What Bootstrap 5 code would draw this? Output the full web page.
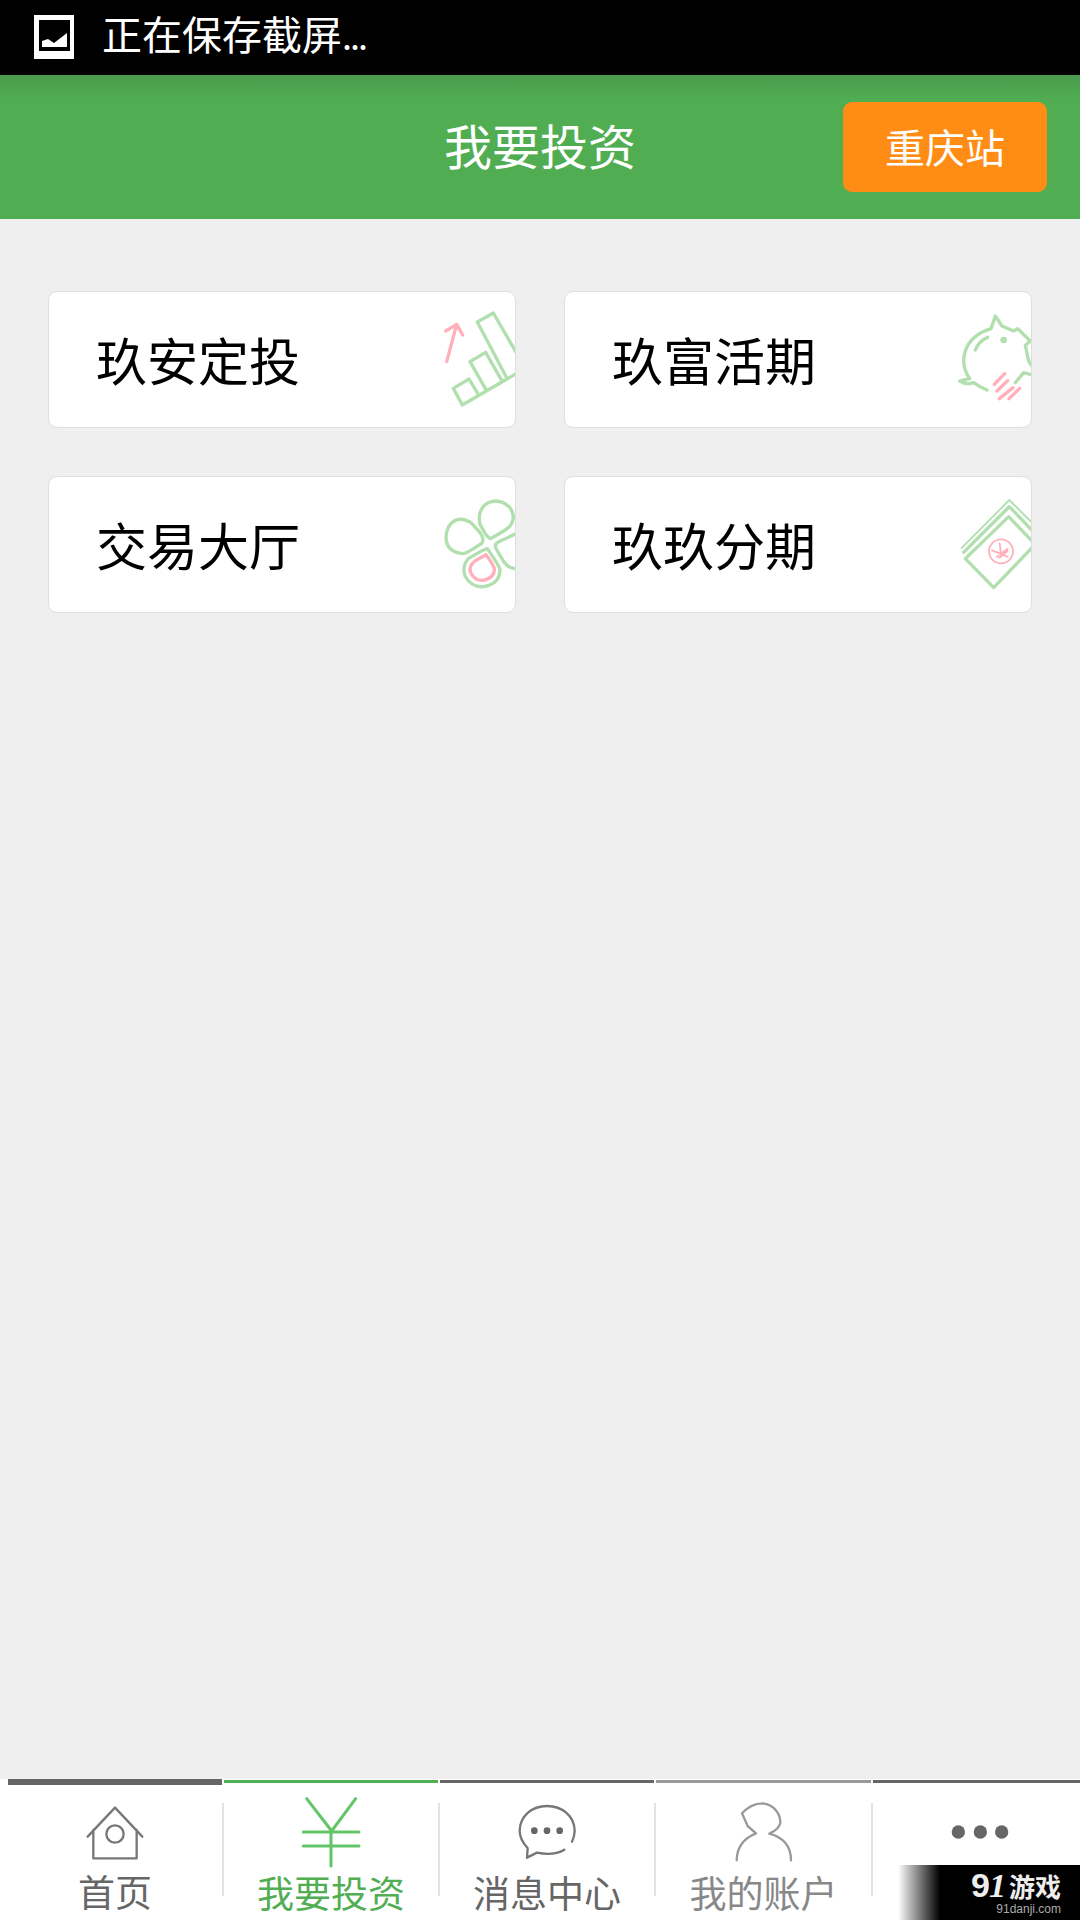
<!DOCTYPE html>
<html lang="zh-CN">
<head>
    <meta charset="UTF-8">
    <meta name="viewport" content="width=device-width, initial-scale=1">
    <title>我要投资</title>
    <link href="https://cdn.jsdelivr.net/npm/bootstrap@5.3.2/dist/css/bootstrap.min.css" rel="stylesheet">
    <style>
        html, body { height: 1920px; }
        body {
            width: 1080px;
            margin: 0;
            background-color: #efefef;
            font-family: "Noto Sans CJK SC", "Liberation Sans", sans-serif;
        }
        .status-strip { height: 75px; background-color: #000; color: #fff; font-size: 40px; line-height: 1; padding-left: 34px; gap: 28px; }
        .status-icon { margin-top: -2px; }
        .status-text { margin-top: -9px; }
        .status-dots { letter-spacing: -2px; font-size: 36px; }
        .top-header {
            height: 144px;
            display: grid;
            grid-template-columns: 1fr auto 1fr;
            align-items: center;
            color: #fff;
            background: linear-gradient(180deg, #4a9c4e 0, #50ad52 24px);
        }
        .top-title { font-size: 48px; line-height: 1; margin-top: -6px; }
        .site-btn {
            justify-self: end;
            width: 204px;
            height: 90px;
            margin: 0 33px 0 0;
            padding: 0 0 3px 0;
            border: 0;
            border-radius: 9px;
            background-color: #ff8c14;
            color: #fff;
            font-size: 40px;
            line-height: 1;
        }
        .invest-grid {
            display: grid;
            grid-template-columns: 468px 468px;
            grid-auto-rows: 137px;
            gap: 48px;
            padding: 72px 48px 0;
        }
        .invest-card {
            border: 1px solid #dedede;
            border-radius: 9px;
            overflow: hidden;
            padding-left: 47px;
            font-size: 51px;
            line-height: 1;
            color: #000;
        }
        .invest-card svg { flex: none; }
        .ic-green { fill: none; stroke: #b1dfae; stroke-width: 10; stroke-linecap: round; stroke-linejoin: round; }
        .ic-pink { fill: none; stroke: #ffb0ba; stroke-width: 10; stroke-linecap: round; stroke-linejoin: round; }
        .ic-thin { stroke-width: 5.5; }
        .ic-flat { stroke-linecap: butt; }
        .tab-strip { height: 141px; background-color: #fff; padding-left: 8px; overflow: hidden; position: relative; }
        .tab-cell { flex: 0 0 216px; position: relative; text-align: center; color: #666; }
        .tab-cell.wider { flex-basis: 217px; }
        .tab-cell.has-rule::after {
            content: "";
            position: absolute;
            right: 0;
            top: 24px;
            width: 2px;
            height: 93px;
            background-color: #e2e2e2;
        }
        .tab-bar-wrap { height: 16px; padding-right: 2px; }
        .tab-bar { height: 3px; margin-top: 1px; background-color: #666; }
        .tab-bar.thick { height: 6px; margin-top: 0; }
        .tab-bar.green { background-color: #51ae53; }
        .tab-bar.soft { background-color: #999; }
        .tab-cell svg { display: block; margin: 0 auto; }
        .tab-label { font-size: 37px; line-height: 40px; margin-top: -2px; padding-right: 2px; white-space: nowrap; }
        .tab-label.green { color: #51ae53; }
        .tab-label.soft { color: #888; }
        .tab-line { fill: none; stroke: #777; stroke-width: 7; stroke-linecap: round; stroke-linejoin: round; }
        .tab-line.soft { stroke: #999; }
        .tab-line.green { stroke: #62c668; stroke-width: 9; }
        .brand-patch {
            position: absolute;
            right: 0;
            bottom: 0;
            width: 182px;
            height: 55px;
            padding-right: 19px;
            text-align: right;
            color: #eee;
            background: linear-gradient(90deg, #fff 0, #000 42px);
        }
        .brand-main { font-size: 26px; line-height: 30px; margin-top: 5px; font-weight: 700; }
        .brand-num { font-family: "Liberation Sans", sans-serif; font-size: 34px; margin-right: 4px; letter-spacing: -1px; }
        .brand-num i { font-family: "Liberation Serif", serif; }
        .brand-url { font-family: "Liberation Sans", sans-serif; font-size: 12px; line-height: 14px; color: #aaa; margin-top: 1px; }
    </style>
</head>
<body class="d-flex flex-column">
    <div class="status-strip d-flex align-items-center">
        <svg class="status-icon" width="40" height="44" viewBox="0 0 40 44">
            <rect width="40" height="44" fill="#fff"/>
            <rect x="5" y="5" width="31" height="31" fill="#000"/>
            <path d="M8 32 V26 L14 24 L20 28 L33 18 V32 Z" fill="#fff"/>
        </svg>
        <span class="status-text">正在保存截屏<span class="status-dots">...</span></span>
    </div>

    <div class="top-header">
        <span></span>
        <span class="top-title">我要投资</span>
        <button class="btn site-btn" type="button">重庆站</button>
    </div>

    <div class="invest-grid flex-grow-1">
        <a class="card invest-card flex-row align-items-center justify-content-between text-decoration-none">
            <span>玖安定投</span>
            <svg width="85" height="135" viewBox="90 38 255 405">
                <path class="ic-pink" d="M140 247 L170 135 M137 155 L170 135 L188 167"/>
                <path class="ic-green" d="M187 377 L350 282 M187 377 L160 327 L207 299 L235 345 M258 331 L210 247 L257 219 L305 303 M320 295 L232 128 L280 101 L350 222"/>
            </svg>
        </a>
        <a class="card invest-card flex-row align-items-center justify-content-between text-decoration-none">
            <span>玖富活期</span>
            <svg width="85" height="135" viewBox="47 38 255 405">
                <path class="ic-green" d="M118 298 C85 250 95 175 182 148 L195 110 L215 140 L250 155 L262 148 L300 185 L285 198 L295 245 L310 268 M310 288 L280 280 L255 310 M170 332 Q150 325 130 310 Q110 318 88 305 Q105 300 118 298 M135 212 Q145 185 172 174"/>
                <circle cx="220" cy="182" r="10" fill="#b1dfae"/>
                <path class="ic-pink" d="M192 315 L223 283 M200 335 L232 304 M207 358 L248 325 M236 358 L268 327"/>
            </svg>
        </a>
        <a class="card invest-card flex-row align-items-center justify-content-between text-decoration-none">
            <span>交易大厅</span>
            <svg width="85" height="135" viewBox="90 23 255 405">
                <path class="ic-green" d="M245 222 Q255 212 240 190 L218 165 Q200 148 175 150 Q140 160 138 205 Q140 250 190 253 Q200 252 245 222 Z"/>
                <path class="ic-green" d="M272 208 Q262 205 255 192 L240 165 Q230 120 265 100 Q300 85 330 115 Q350 145 330 170 Q325 178 272 208 Z"/>
                <path class="ic-green" d="M350 192 L295 218 Q282 225 288 238 L310 275 Q325 298 350 298"/>
                <path class="ic-green" d="M262 238 Q255 238 205 268 Q185 290 195 320 Q215 355 250 352 Q300 345 300 300 Q298 290 262 238 Z"/>
                <path class="ic-pink" d="M258 256 L225 275 Q205 290 212 310 Q225 335 250 333 Q285 325 283 298 Q280 285 258 256 Z"/>
            </svg>
        </a>
        <a class="card invest-card flex-row align-items-center justify-content-between text-decoration-none">
            <span>玖玖分期</span>
            <svg width="85" height="135" viewBox="47 23 255 405">
                <path class="ic-green ic-thin ic-flat" d="M92 238 L237 92 L310 165"/>
                <path class="ic-green ic-flat" d="M97 252 L237 112 L310 188"/>
                <path class="ic-green ic-flat" d="M310 220 L235 142 L105 268 L190 355 L310 230"/>
                <circle class="ic-pink ic-thin" cx="212" cy="246" r="36"/>
                <path class="ic-pink ic-thin" d="M208 222 L213 262 M185 243 L232 262 M200 262 L232 238 M207 265 L232 245"/>
            </svg>
        </a>
    </div>

    <div class="tab-strip d-flex">
        <div class="tab-cell has-rule">
            <div class="tab-bar-wrap"><div class="tab-bar thick"></div></div>
            <svg width="100" height="78" viewBox="198 75 300 234">
                <path class="tab-line" d="M263 200 L345 113 L427 200 M280 180 V265 H410 V180"/>
                <circle class="tab-line" cx="345" cy="192" r="26"/>
            </svg>
            <div class="tab-label">首页</div>
        </div>
        <div class="tab-cell has-rule">
            <div class="tab-bar-wrap"><div class="tab-bar green"></div></div>
            <svg width="100" height="78" viewBox="846 75 300 234">
                <path class="tab-line green" d="M920 83 L995 180 L1067 83 M910 183 H1077 M910 225 H1077 M993 180 V285"/>
            </svg>
            <div class="tab-label green">我要投资</div>
        </div>
        <div class="tab-cell has-rule">
            <div class="tab-bar-wrap"><div class="tab-bar"></div></div>
            <svg width="100" height="78" viewBox="203 75 300 234">
                <path class="tab-line" d="M402 236 Q370 255 320 245 L290 260 L292 232 Q268 205 268 180 C268 135 305 105 350 105 C395 105 433 135 433 180 Q433 195 425 212"/>
                <circle cx="312" cy="179" r="10" fill="#666"/>
                <circle cx="350" cy="179" r="10" fill="#666"/>
                <circle cx="388" cy="179" r="10" fill="#666"/>
            </svg>
            <div class="tab-label">消息中心</div>
        </div>
        <div class="tab-cell wider has-rule">
            <div class="tab-bar-wrap"><div class="tab-bar soft"></div></div>
            <svg width="100" height="78" viewBox="852 75 300 234">
                <path class="tab-line soft" d="M933 127 Q960 97 995 97 C1030 100 1048 130 1048 155 Q1045 175 1015 188 Q1080 205 1080 268 M933 127 L950 165 L975 187 Q918 210 917 268"/>
            </svg>
            <div class="tab-label soft">我的账户</div>
        </div>
        <div class="tab-cell">
            <div class="tab-bar-wrap"><div class="tab-bar"></div></div>
            <svg width="100" height="78" viewBox="213 75 300 234">
                <circle cx="295" cy="183" r="20" fill="#666"/>
                <circle cx="361" cy="183" r="20" fill="#666"/>
                <circle cx="425" cy="183" r="20" fill="#666"/>
            </svg>
        </div>
        <div class="brand-patch">
            <div class="brand-main"><span class="brand-num">9<i>1</i></span>游戏</div>
            <div class="brand-url">91danji.com</div>
        </div>
    </div>

    <script src="https://cdn.jsdelivr.net/npm/bootstrap@5.3.2/dist/js/bootstrap.bundle.min.js"></script>
</body>
</html>
